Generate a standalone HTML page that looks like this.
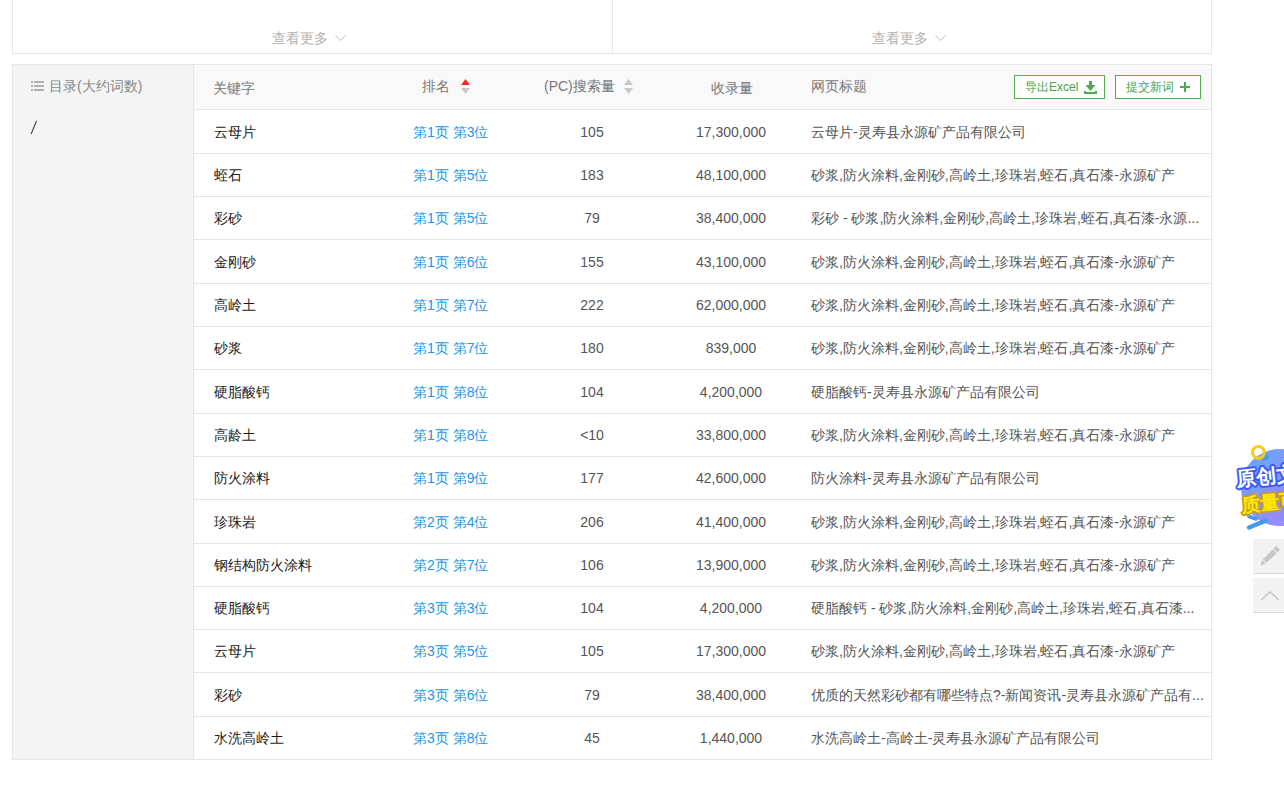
<!DOCTYPE html>
<html><head><meta charset="utf-8">
<style>
*{margin:0;padding:0;box-sizing:border-box}
html,body{width:1284px;height:788px;overflow:hidden;background:#fff;font-family:"Liberation Sans",sans-serif;font-size:14px;color:#333}
.a{position:absolute}
.ln{position:absolute;background:#e6e6e6}
.more{position:absolute;top:28px;font-size:14px;color:#b3b3b3;line-height:20px;white-space:nowrap}
.side{position:absolute;left:13px;top:65px;width:180px;height:694px;background:#f4f4f4}
.side-t{position:absolute;left:49px;top:78px;font-size:14px;color:#888;line-height:16px;white-space:nowrap}
.slash{position:absolute;left:30px;top:119px;color:#333;font-size:14px;line-height:16px}
.hdr{position:absolute;left:194px;top:65px;width:1017px;height:44px;background:#f9f9f9}
.h{position:absolute;font-size:14px;color:#777;line-height:16px;white-space:nowrap}
.row{position:absolute;left:194px;width:1017px;border-bottom:1px solid #e6e6e6}
.c{position:absolute;top:2px;bottom:0;display:flex;align-items:center;white-space:nowrap;font-size:14px}
.kw{left:20px;color:#1a1a1a}
.rk{left:219px;color:#2196e8}
.sv{left:338px;width:120px;justify-content:center;color:#555;top:0}
.ix{left:477px;width:120px;justify-content:center;color:#555;top:0}
.tt{left:617px;color:#555}
.btn{position:absolute;top:75px;height:24px;border:1px solid #55aa55;color:#45a545;font-size:12px;line-height:22px;background:#fff;white-space:nowrap}
</style></head><body>
<div class="ln" style="left:12px;top:0;width:1px;height:54px"></div>
<div class="ln" style="left:1211px;top:0;width:1px;height:54px"></div>
<div class="ln" style="left:612px;top:0;width:1px;height:54px"></div>
<div class="ln" style="left:12px;top:53px;width:1200px;height:1px"></div>
<div class="more" style="left:272px">查看更多 <svg width="12" height="7" viewBox="0 0 12 7" style="margin-left:3px;vertical-align:1px"><path d="M0.5 0.5L5.5 5.5L10.5 0.5" fill="none" stroke="#c0c0c0" stroke-width="1"/></svg></div>
<div class="more" style="left:872px">查看更多 <svg width="12" height="7" viewBox="0 0 12 7" style="margin-left:3px;vertical-align:1px"><path d="M0.5 0.5L5.5 5.5L10.5 0.5" fill="none" stroke="#c0c0c0" stroke-width="1"/></svg></div>

<div class="ln" style="left:12px;top:64px;width:1200px;height:1px"></div>
<div class="ln" style="left:12px;top:64px;width:1px;height:696px"></div>
<div class="ln" style="left:1211px;top:64px;width:1px;height:696px"></div>
<div class="ln" style="left:12px;top:759px;width:1200px;height:1px"></div>
<div class="side"></div>
<div class="ln" style="left:193px;top:65px;width:1px;height:694px"></div>
<svg class="a" style="left:31px;top:81px" width="14" height="10" viewBox="0 0 14 10"><g fill="#b0b0b0"><rect x="0" y="0" width="2" height="2"/><rect x="3" y="0" width="10" height="2"/><rect x="0" y="4" width="2" height="2"/><rect x="3" y="4" width="10" height="2"/><rect x="0" y="8" width="2" height="2"/><rect x="3" y="8" width="10" height="2"/></g></svg>
<div class="side-t">目录(大约词数)</div>
<svg class="a" style="left:28px;top:119px" width="12" height="17" viewBox="28 119 12 17"><path d="M31.3 133.6L36.3 121.4" stroke="#3a3a3a" stroke-width="1.15" stroke-linecap="round"/></svg>

<div class="hdr"></div>
<div class="ln" style="left:194px;top:109px;width:1017px;height:1px"></div>
<div class="h" style="left:213px;top:80px">关键字</div>
<div class="h" style="left:422px;top:78px">排名</div>
<div class="h" style="left:544px;top:78px">(PC)搜索量</div>
<div class="h" style="left:711px;top:80px">收录量</div>
<div class="h" style="left:811px;top:78px">网页标题</div>
<div class="btn" style="left:1014px;width:91px"><span class="a" style="left:10px;top:0">导出Excel</span><svg class="a" style="left:69px;top:5px" width="14" height="14" viewBox="0 0 14 14"><path d="M5 0H8V4H11.5L6.5 10L1.5 4H5Z" fill="#4dab4d"/><path d="M0 10H2V11H11V10H13V13H0Z" fill="#4dab4d"/></svg></div>
<div class="btn" style="left:1115px;width:86px"><span class="a" style="left:10px;top:0">提交新词</span><svg class="a" style="left:64px;top:6px" width="12" height="12" viewBox="0 0 12 12"><path d="M0 4H10V6H0Z M4 0H6V10H4Z" fill="#4dab4d"/></svg></div>
<svg class="a" style="left:460px;top:78px" width="12" height="17" viewBox="0 0 12 17"><path d="M1 7H10L5.5 1Z" fill="#ff2626"/><path d="M1 10H10L5.5 16Z" fill="#c8c8c8"/></svg>
<svg class="a" style="left:623px;top:78px" width="12" height="17" viewBox="0 0 12 17"><path d="M1 7H10L5.5 1Z" fill="#c8c8c8"/><path d="M1 10H10L5.5 16Z" fill="#c8c8c8"/></svg>

<div class="row" style="top:110px;height:44px"><span class="c kw">云母片</span><span class="c rk">第1页 第3位</span><span class="c sv">105</span><span class="c ix">17,300,000</span><span class="c tt">云母片-灵寿县永源矿产品有限公司</span></div>
<div class="row" style="top:154px;height:43px"><span class="c kw">蛭石</span><span class="c rk">第1页 第5位</span><span class="c sv">183</span><span class="c ix">48,100,000</span><span class="c tt">砂浆,防火涂料,金刚砂,高岭土,珍珠岩,蛭石,真石漆-永源矿产</span></div>
<div class="row" style="top:197px;height:43px"><span class="c kw">彩砂</span><span class="c rk">第1页 第5位</span><span class="c sv">79</span><span class="c ix">38,400,000</span><span class="c tt">彩砂 - 砂浆,防火涂料,金刚砂,高岭土,珍珠岩,蛭石,真石漆-永源...</span></div>
<div class="row" style="top:240px;height:44px"><span class="c kw">金刚砂</span><span class="c rk">第1页 第6位</span><span class="c sv">155</span><span class="c ix">43,100,000</span><span class="c tt">砂浆,防火涂料,金刚砂,高岭土,珍珠岩,蛭石,真石漆-永源矿产</span></div>
<div class="row" style="top:284px;height:43px"><span class="c kw">高岭土</span><span class="c rk">第1页 第7位</span><span class="c sv">222</span><span class="c ix">62,000,000</span><span class="c tt">砂浆,防火涂料,金刚砂,高岭土,珍珠岩,蛭石,真石漆-永源矿产</span></div>
<div class="row" style="top:327px;height:43px"><span class="c kw">砂浆</span><span class="c rk">第1页 第7位</span><span class="c sv">180</span><span class="c ix">839,000</span><span class="c tt">砂浆,防火涂料,金刚砂,高岭土,珍珠岩,蛭石,真石漆-永源矿产</span></div>
<div class="row" style="top:370px;height:44px"><span class="c kw">硬脂酸钙</span><span class="c rk">第1页 第8位</span><span class="c sv">104</span><span class="c ix">4,200,000</span><span class="c tt">硬脂酸钙-灵寿县永源矿产品有限公司</span></div>
<div class="row" style="top:414px;height:43px"><span class="c kw">高龄土</span><span class="c rk">第1页 第8位</span><span class="c sv">&lt;10</span><span class="c ix">33,800,000</span><span class="c tt">砂浆,防火涂料,金刚砂,高岭土,珍珠岩,蛭石,真石漆-永源矿产</span></div>
<div class="row" style="top:457px;height:43px"><span class="c kw">防火涂料</span><span class="c rk">第1页 第9位</span><span class="c sv">177</span><span class="c ix">42,600,000</span><span class="c tt">防火涂料-灵寿县永源矿产品有限公司</span></div>
<div class="row" style="top:500px;height:44px"><span class="c kw">珍珠岩</span><span class="c rk">第2页 第4位</span><span class="c sv">206</span><span class="c ix">41,400,000</span><span class="c tt">砂浆,防火涂料,金刚砂,高岭土,珍珠岩,蛭石,真石漆-永源矿产</span></div>
<div class="row" style="top:544px;height:43px"><span class="c kw">钢结构防火涂料</span><span class="c rk">第2页 第7位</span><span class="c sv">106</span><span class="c ix">13,900,000</span><span class="c tt">砂浆,防火涂料,金刚砂,高岭土,珍珠岩,蛭石,真石漆-永源矿产</span></div>
<div class="row" style="top:587px;height:43px"><span class="c kw">硬脂酸钙</span><span class="c rk">第3页 第3位</span><span class="c sv">104</span><span class="c ix">4,200,000</span><span class="c tt">硬脂酸钙 - 砂浆,防火涂料,金刚砂,高岭土,珍珠岩,蛭石,真石漆...</span></div>
<div class="row" style="top:630px;height:43px"><span class="c kw">云母片</span><span class="c rk">第3页 第5位</span><span class="c sv">105</span><span class="c ix">17,300,000</span><span class="c tt">砂浆,防火涂料,金刚砂,高岭土,珍珠岩,蛭石,真石漆-永源矿产</span></div>
<div class="row" style="top:673px;height:44px"><span class="c kw">彩砂</span><span class="c rk">第3页 第6位</span><span class="c sv">79</span><span class="c ix">38,400,000</span><span class="c tt">优质的天然彩砂都有哪些特点?-新闻资讯-灵寿县永源矿产品有...</span></div>
<div class="row" style="top:717px;height:43px"><span class="c kw">水洗高岭土</span><span class="c rk">第3页 第8位</span><span class="c sv">45</span><span class="c ix">1,440,000</span><span class="c tt">水洗高岭土-高岭土-灵寿县永源矿产品有限公司</span></div>
<svg class="a" style="left:1224px;top:436px" width="60" height="100" viewBox="1224 436 60 100">
<defs><linearGradient id="bg1" x1="0" y1="0" x2="1" y2="1"><stop offset="0" stop-color="#64a8ff"/><stop offset="1" stop-color="#a884f4"/></linearGradient></defs>
<circle cx="1279.5" cy="487.5" r="38.5" fill="url(#bg1)"/>
<circle cx="1290" cy="492" r="30" fill="#8f86f2" opacity="0.35"/>
<circle cx="1265" cy="457" r="3.5" fill="#4f9be8"/>
<path d="M1249 527.5L1266 520.5" stroke="#3f9af0" stroke-width="4.5" stroke-linecap="round"/>
<path d="M1249 516.5L1256 519" stroke="#3f9af0" stroke-width="3.5" stroke-linecap="round" fill="none"/>
<circle cx="1258.4" cy="452.4" r="5.9" fill="none" stroke="#fccb0a" stroke-width="3"/>
<g transform="rotate(-6 1260 480)" font-family="Liberation Sans, sans-serif" font-weight="900">
<text x="1236.5" y="484" font-size="20" fill="#fff" stroke="#3a5af6" stroke-width="4" paint-order="stroke" stroke-linejoin="round">原创文</text>
<text x="1239" y="509.5" font-size="19" fill="#ffea00" stroke="#c49a30" stroke-width="3.5" paint-order="stroke" stroke-linejoin="round">质量可</text>
</g>
</svg>
<div class="a" style="left:1253px;top:539px;width:31px;height:35px;background:#f2f2f2;border-bottom:1px solid #d9d9d9"></div>
<svg class="a" style="left:1253px;top:539px" width="31" height="35" viewBox="1253 539 31 35"><path d="M1260.5 565.5L1265.9 563.8L1262.2 560.1Z" fill="#c6c6c6"/><path d="M1266.6 563.1L1262.9 559.4L1272.8 549.5L1276.5 553.2Z" fill="#c6c6c6"/><path d="M1277.2 552.5L1273.5 548.8L1276.3 546L1280 549.7Z" fill="#c6c6c6"/></svg>
<div class="a" style="left:1253px;top:578px;width:31px;height:35px;background:#f2f2f2;border-bottom:1px solid #d9d9d9"></div>
<svg class="a" style="left:1253px;top:578px" width="31" height="35" viewBox="1253 578 31 35"><path d="M1261 600L1270 592L1279 600" fill="none" stroke="#c6c6c6" stroke-width="1.6"/></svg>

</body></html>
